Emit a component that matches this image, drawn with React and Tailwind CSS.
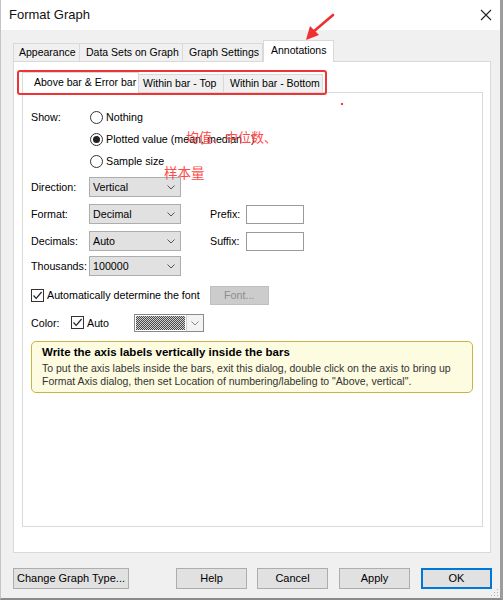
import React from "react";

const ui = { fontFamily: '"Liberation Sans", Arial, sans-serif' };
const cjk = { fontFamily: '"Noto Sans CJK SC", "Noto Sans", sans-serif' };

function Chevron({ color = "#555" }) {
  return (
    <svg width="8" height="5" viewBox="0 0 8 5" className="shrink-0">
      <path d="M0.5 0.5 L4 4 L7.5 0.5" fill="none" stroke={color} strokeWidth="1" />
    </svg>
  );
}

function Select({ value }) {
  return (
    <div className="w-[92px] h-[20px] bg-[#e1e1e1] border border-[#adadad] flex items-center justify-between pl-[3px] pr-[5px]">
      <span>{value}</span>
      <Chevron />
    </div>
  );
}

function Radio({ checked, label }) {
  return (
    <div className="h-[22px] flex items-center gap-[2px]">
      <div className="w-[13px] h-[13px] rounded-full border border-[#333] bg-white flex items-center justify-center">
        {checked && <div className="w-[7px] h-[7px] rounded-full bg-[#222]" />}
      </div>
      <span className="ml-[1px]">{label}</span>
    </div>
  );
}

function Check({ label }) {
  return (
    <div className="flex items-center gap-[3px]">
      <div className="w-[13px] h-[13px] border border-[#333] bg-white flex items-center justify-center">
        <svg width="11" height="11" viewBox="0 0 11 11">
          <path d="M1.5 5.5 L4.2 8.4 L9.6 2" fill="none" stroke="#222" strokeWidth="1.2" />
        </svg>
      </div>
      <span>{label}</span>
    </div>
  );
}

function Button({ children, primary, className = "" }) {
  return (
    <div
      className={`h-[21px] flex items-center justify-center bg-[#e1e1e1] ${
        primary ? "border-2 border-[#0078d7]" : "border border-[#adadad]"
      } ${className}`}
    >
      {children}
    </div>
  );
}

export default function App() {
  return (
    <div style={ui} className="relative w-[503px] h-[600px] text-[11px] text-black bg-[#f0f0f0] flex flex-col border-l border-[#c4c4c4] border-r-[3px] border-r-[#9c9c9c] border-b-2 border-b-[#8a8a8a] overflow-hidden">
      {/* title bar */}
      <div className="h-[30px] bg-white flex items-center justify-between pl-[8px] pr-[8px] shrink-0">
        <span className="text-[13px] text-[#111]">Format Graph</span>
        <svg width="12" height="12" viewBox="0 0 12 12">
          <path d="M1 1 L11 11 M11 1 L1 11" stroke="#222" strokeWidth="1.1" />
        </svg>
      </div>

      {/* top tab strip */}
      <div className="flex items-end pl-[12px] mt-[10px] h-[21px] text-[10.5px] whitespace-nowrap">
        <div className="w-[67px] h-[18px] pl-[5px] flex items-center border border-b-0 border-[#d9d9d9] bg-[#f0f0f0]">Appearance</div>
        <div className="w-[103px] h-[18px] pl-[6px] flex items-center border border-l-0 border-b-0 border-[#d9d9d9] bg-[#f0f0f0]">Data Sets on Graph</div>
        <div className="w-[80px] h-[18px] pl-[6px] flex items-center border border-l-0 border-b-0 border-[#d9d9d9] bg-[#f0f0f0]">Graph Settings</div>
        <div className="w-[71px] h-[22px] pl-[7px] flex items-center border border-b-0 border-[#d9d9d9] bg-white relative top-[1px] pb-[2px]">Annotations</div>
      </div>

      {/* outer tab panel */}
      <div className="ml-[12px] w-[478px] h-[492px] bg-white border border-[#d9d9d9] pt-[9px] px-[8px]">
        {/* sub tabs */}
        <div className="flex items-end h-[21px] text-[10.5px] whitespace-nowrap">
          <div className="h-[21px] w-[117px] pl-[11px] flex items-center bg-white border border-b-0 border-[#d9d9d9] relative top-[1px]">Above bar &amp; Error bar</div>
          <div className="h-[18px] w-[85px] pl-[4px] flex items-center bg-[#f0f0f0] border border-l-0 border-b-0 border-[#d9d9d9]">Within bar - Top</div>
          <div className="h-[18px] w-[99px] pl-[6px] flex items-center bg-[#f0f0f0] border border-l-0 border-b-0 border-[#d9d9d9]">Within bar - Bottom</div>
        </div>

        {/* inner panel */}
        <div className="w-[461px] h-[435px] border border-[#d9d9d9] bg-white pl-[8px] pt-[13px] text-[10.7px]">
          <div className="flex">
            <div className="w-[59px] h-[22px] flex items-center">Show:</div>
            <div className="flex flex-col">
              <Radio label="Nothing" />
              <Radio checked label="Plotted value (mean, median...)" />
              <Radio label="Sample size" />
            </div>
          </div>

          <div className="flex items-center mt-[5px]">
            <div className="w-[58px]">Direction:</div>
            <Select value="Vertical" />
          </div>

          <div className="flex items-center mt-[7px]">
            <div className="w-[58px]">Format:</div>
            <Select value="Decimal" />
            <div className="w-[36px] ml-[29px]">Prefix:</div>
            <div className="w-[58px] h-[19px] border border-[#9a9a9a] bg-white" />
          </div>

          <div className="flex items-center mt-[7px]">
            <div className="w-[58px]">Decimals:</div>
            <Select value="Auto" />
            <div className="w-[36px] ml-[29px]">Suffix:</div>
            <div className="w-[58px] h-[19px] border border-[#9a9a9a] bg-white" />
          </div>

          <div className="flex items-center mt-[5px]">
            <div className="w-[58px]">Thousands:</div>
            <Select value="100000" />
          </div>

          <div className="flex items-center mt-[10px] h-[19px]">
            <Check label="Automatically determine the font" />
            <div className="ml-[10px] w-[59px] h-[19px] bg-[#cccccc] border border-[#bfbfbf] text-[#8d8d8d] flex items-center justify-center">Font...</div>
          </div>

          <div className="flex items-center mt-[9px] h-[18px]">
            <div className="w-[40px]">Color:</div>
            <Check label="Auto" />
            <div className="ml-[25px] w-[70px] h-[18px] border border-[#8a8a8a] flex">
              <div className="w-[51px] h-full bg-[repeating-conic-gradient(#4a4a4a_0_25%,#d0d0d0_0_50%)] bg-[length:2px_2px] border border-white" />
              <div className="flex-1 bg-[#f3f3f3] border-l border-[#d0d0d0] flex items-center justify-center">
                <Chevron color="#888" />
              </div>
            </div>
          </div>

          {/* help note */}
          <div className="mt-[9px] w-[442px] h-[52px] rounded-[5px] border border-[#c8b54a] bg-[#fdfbe0] pl-[10px] pt-[3px] whitespace-nowrap">
            <div className="font-bold text-[11.5px] leading-[15px]">Write the axis labels vertically inside the bars</div>
            <div className="text-[10.5px] leading-[13px] text-[#333] mt-[2px]">
              To put the axis labels inside the bars, exit this dialog, double click on the axis to bring up
              <br />
              Format Axis dialog, then set Location of numbering/labeling to "Above, vertical".
            </div>
          </div>
        </div>
      </div>

      {/* dialog buttons */}
      <div className="flex items-center mt-[15px] pl-[12px]">
        <Button className="w-[116px]">Change Graph Type...</Button>
        <Button className="w-[71px] ml-[47px]">Help</Button>
        <Button className="w-[71px] ml-[10px]">Cancel</Button>
        <Button className="w-[71px] ml-[11px]">Apply</Button>
        <Button primary className="w-[71px] ml-[11px]">OK</Button>
      </div>

      {/* resize grip */}
      <svg className="absolute right-[1px] bottom-[1px]" width="8" height="8" viewBox="0 0 8 8">
        <g fill="#b0b0b0">
          <rect x="6" y="0" width="1" height="1" />
          <rect x="3" y="3" width="1" height="1" />
          <rect x="6" y="3" width="1" height="1" />
          <rect x="0" y="6" width="1" height="1" />
          <rect x="3" y="6" width="1" height="1" />
          <rect x="6" y="6" width="1" height="1" />
        </g>
      </svg>

      {/* red markup */}
      <svg className="absolute left-[296px] top-[10px]" width="44" height="36" viewBox="0 0 44 36">
        <path d="M36 5 L16 22" stroke="#f03030" strokeWidth="2.6" strokeLinecap="round" />
        <path d="M9 30 L13 16 L22 25 Z" fill="#f03030" />
      </svg>
      <div className="absolute left-[16px] top-[70px] w-[310px] h-[25px] border-2 border-[#ee3535] rounded-[3px]" />
      <div className="absolute left-[340px] top-[103px] w-[2px] h-[2px] bg-[#ff3030]" />
      <div style={cjk} className="absolute left-[185px] top-[128px] text-[13px] leading-[18px] text-[#ff4a4a]">均值、中位数、</div>
      <div style={cjk} className="absolute left-[163px] top-[163px] text-[13.5px] leading-[18px] text-[#ff4a4a]">样本量</div>
    </div>
  );
}
